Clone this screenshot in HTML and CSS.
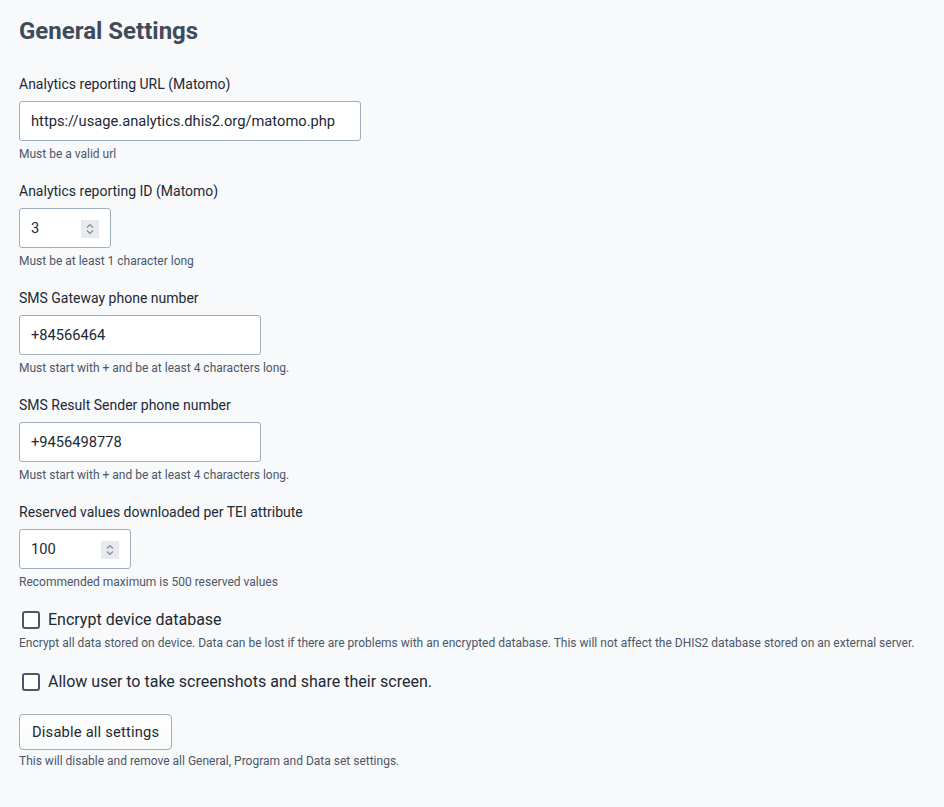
FILE: index.html
```html
<!DOCTYPE html>
<html lang="en">
<head>
<meta charset="utf-8">
<title>General Settings</title>
<link rel="stylesheet" href="styles.css">
</head>
<body>
<main class="page">
  <h2 class="title">General Settings</h2>

  <div class="field">
    <label class="label">Analytics reporting URL (Matomo)</label>
    <div class="input w-url"><span class="value">https://usage.analytics.dhis2.org/matomo.php</span></div>
    <p class="help">Must be a valid url</p>
  </div>

  <div class="field">
    <label class="label">Analytics reporting ID (Matomo)</label>
    <div class="input number w-id">
      <span class="value">3</span>
      <span class="spin"><svg width="18" height="18" viewBox="0 0 18 18"><path d="M6 7.5 L9 4.5 L12 7.5 M6 10.5 L9 13.5 L12 10.5" fill="none" stroke="#7c8794" stroke-width="1.1"/></svg></span>
    </div>
    <p class="help">Must be at least 1 character long</p>
  </div>

  <div class="field">
    <label class="label">SMS Gateway phone number</label>
    <div class="input w-phone"><span class="value">+84566464</span></div>
    <p class="help">Must start with + and be at least 4 characters long.</p>
  </div>

  <div class="field">
    <label class="label">SMS Result Sender phone number</label>
    <div class="input w-phone"><span class="value">+9456498778</span></div>
    <p class="help">Must start with + and be at least 4 characters long.</p>
  </div>

  <div class="field">
    <label class="label">Reserved values downloaded per TEI attribute</label>
    <div class="input number w-res">
      <span class="value">100</span>
      <span class="spin"><svg width="18" height="18" viewBox="0 0 18 18"><path d="M6 7.5 L9 4.5 L12 7.5 M6 10.5 L9 13.5 L12 10.5" fill="none" stroke="#7c8794" stroke-width="1.1"/></svg></span>
    </div>
    <p class="help">Recommended maximum is 500 reserved values</p>
  </div>

  <div class="check-block">
    <label class="check"><span class="box"></span><span class="check-text">Encrypt device database</span></label>
    <p class="help">Encrypt all data stored on device. Data can be lost if there are problems with an encrypted database. This will not affect the DHIS2 database stored on an external server.</p>
  </div>

  <div class="check-block second">
    <label class="check"><span class="box"></span><span class="check-text">Allow user to take screenshots and share their screen.</span></label>
  </div>

  <div class="button-block">
    <button class="button" type="button">Disable all settings</button>
    <p class="help tight">This will disable and remove all General, Program and Data set settings.</p>
  </div>
</main>
</body>
</html>
```

FILE: styles.css
```css
* { box-sizing: border-box; }

html, body {
  margin: 0;
  padding: 0;
  background: #f8f9fb;
  font-family: Roboto, "Liberation Sans", sans-serif;
  color: #212934;
}

.page {
  padding: 17px 19px 0 19px;
  display: flex;
  flex-direction: column;
  align-items: flex-start;
}

.title {
  margin: 0 0 30px 0;
  font-size: 24px;
  line-height: 28px;
  font-weight: 700;
  color: #404b5a;
}

.field {
  display: flex;
  flex-direction: column;
  align-items: flex-start;
  margin-bottom: 21px;
}

.label {
  font-size: 14px;
  line-height: 18px;
  margin-bottom: 8px;
  color: #212934;
}

.input {
  height: 40px;
  border: 1px solid #a0adba;
  border-radius: 3px;
  background: #ffffff;
  display: flex;
  align-items: center;
  padding: 0 11px;
  font-size: 14.7px;
  color: #212934;
}

.input.number {
  justify-content: space-between;
  padding-right: 11px;
}

.w-url { width: 342px; }
.w-id { width: 92px; }
.w-phone { width: 242px; }
.w-res { width: 112px; }

.spin {
  width: 18px;
  height: 18px;
  background: #e8eaee;
  display: flex;
  margin-top: 1px;
}

.help {
  margin: 6px 0 0 0;
  font-size: 12px;
  line-height: 14px;
  color: #4a5768;
}

.help.tight { margin-top: 4px; }

.check-block {
  display: flex;
  flex-direction: column;
  align-items: flex-start;
}

.check-block.second { margin-top: 22px; }

.check {
  display: flex;
  align-items: center;
  height: 20px;
  padding-left: 3px;
}

.box {
  width: 18px;
  height: 18px;
  border: 2px solid #4a5768;
  border-radius: 3px;
  background: #ffffff;
  margin-right: 8px;
}

.check-text {
  font-size: 16px;
  line-height: 20px;
  color: #212934;
}

.button-block {
  margin-top: 22px;
  display: flex;
  flex-direction: column;
  align-items: flex-start;
}

.button {
  height: 36px;
  padding: 0 12px;
  border: 1px solid #a0adba;
  border-radius: 4px;
  background: linear-gradient(180deg, #ffffff 0%, #f9fafb 100%);
  font-family: Roboto, "Liberation Sans", sans-serif;
  font-size: 14.7px;
  letter-spacing: 0.2px;
  color: #212934;
}
```
